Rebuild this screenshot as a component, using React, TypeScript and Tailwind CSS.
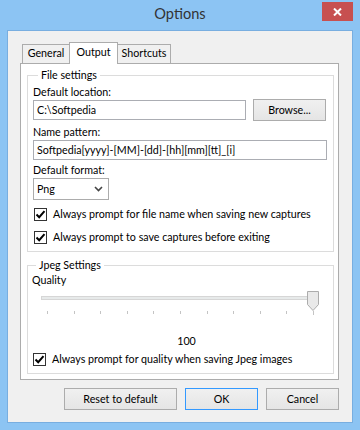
import React from "react";

const font = "font-['Lato','Liberation_Sans',sans-serif]";
const btn =
  "h-[22px] flex items-center justify-center border bg-gradient-to-b from-[#f0f0f0] to-[#e5e5e5] text-[10.7px] text-black";

const Check: React.FC<{ label: string }> = ({ label }) => (
  <div className="h-[16px] flex items-center gap-[6px] pl-[1px]">
    <span className="w-[13px] h-[13px] border border-[#333] bg-white flex items-center justify-center">
      <svg width="11" height="11" viewBox="0 0 11 11">
        <path d="M1.5 5.5 L4.2 8.2 L9.5 2.2" fill="none" stroke="#000" strokeWidth="2" />
      </svg>
    </span>
    <span>{label}</span>
  </div>
);

const Label: React.FC<{ text: string; className?: string }> = ({ text, className }) => (
  <div className={`h-[16px] leading-[16px] ${className ?? ""}`}>{text}</div>
);

const App: React.FC = () => {
  const ticks = Array.from({ length: 11 });

  return (
    <div className={`w-[360px] h-[430px] bg-[#8cc4f3] flex flex-col px-[7px] pb-[7px] ${font} text-[10.7px] text-black`}>
      {/* Title bar */}
      <div className="h-[30px] grid grid-cols-[1fr_auto_1fr]">
        <div />
        <div className="text-[14.6px] text-[#333] leading-[30px] -mt-[1px]">Options</div>
        <div className="flex justify-end items-start pt-[2px]">
          <div className="w-[31px] h-[19px] bg-[#c75050] flex items-center justify-center">
            <svg width="9" height="8" viewBox="0 0 9 8">
              <path d="M1 0.5 L8 7.5 M8 0.5 L1 7.5" stroke="#fff" strokeWidth="2" />
            </svg>
          </div>
        </div>
      </div>

      {/* Client area */}
      <div className="flex-1 bg-[#f0f0f0] border border-[#78aee0] pl-[12px] pr-[13px] pt-[11px]">
        {/* Tabs */}
        <div className="flex items-end h-[21px] pl-[2px]">
          <div className="w-[48px] h-[19px] border border-b-0 border-[#acacac] bg-[#f0f0f0] flex items-center justify-center pb-[1px]">
            General
          </div>
          <div className="relative z-10 -ml-[1px] w-[49px] h-[22px] -mb-[1px] border border-b-0 border-[#acacac] bg-white flex items-center justify-center pb-[3px]">
            Output
          </div>
          <div className="-ml-[1px] w-[54px] h-[19px] border border-b-0 border-[#acacac] bg-[#f0f0f0] flex items-center justify-center pb-[1px]">
            Shortcuts
          </div>
        </div>

        {/* Panel */}
        <div className="w-[319px] h-[317px] bg-white border border-[#acacac] pl-[6px] pt-[3px]">
          {/* File settings */}
          <fieldset className="w-[307px] border border-[#dcdcdc] pl-[5px] pr-[6px] pb-[6px]">
            <legend className="ml-[5px] px-[3px] leading-[16px]">File settings</legend>
            <Label text="Default location:" className="mt-[1px]" />
            <div className="flex gap-[7px]">
              <div className="w-[213px] h-[20px] border border-[#abadb3] bg-white flex items-center pl-[3px]">
                C:\Softpedia
              </div>
              <div className={`${btn} w-[73px] -mt-[1px] h-[22px] border-[#acacac]`}>Browse...</div>
            </div>
            <Label text="Name pattern:" className="mt-[3px]" />
            <div className="w-[294px] h-[20px] border border-[#abadb3] bg-white flex items-center pl-[3px]">
              Softpedia[yyyy]-[MM]-[dd]-[hh][mm][tt]_[i]
            </div>
            <Label text="Default format:" className="mt-[2px]" />
            <div className="w-[76px] h-[22px] border border-[#acacac] bg-white flex items-center justify-between pl-[3px] pr-[5px]">
              <span>Png</span>
              <svg width="9" height="6" viewBox="0 0 9 6">
                <path d="M1 1 L4.5 4.5 L8 1" fill="none" stroke="#444" strokeWidth="1.6" />
              </svg>
            </div>
            <div className="mt-[6px] flex flex-col gap-[7px]">
              <Check label="Always prompt for file name when saving new captures" />
              <Check label="Always prompt to save captures before exiting" />
            </div>
          </fieldset>

          {/* Jpeg settings */}
          <fieldset className="mt-[5px] w-[307px] border border-[#dcdcdc] pl-[4px] pr-[6px] pb-[6px]">
            <legend className="ml-[4px] px-[3px] leading-[16px]">Jpeg Settings</legend>
            <Label text="Quality" className="-mt-[1px]" />
            {/* Slider */}
            <div className="relative h-[26px] mt-[3px] ml-[9px] w-[278px]">
              <div className="absolute left-0 right-0 top-[5px] h-[4px] border border-[#d6d6d6] bg-[#e7eaea]" />
              <svg className="absolute right-0 top-0" width="12" height="20" viewBox="0 0 12 20">
                <path d="M0.5 0.5 H11.5 V13.5 L6 19.5 L0.5 13.5 Z" fill="#e9e9e9" stroke="#acacac" />
              </svg>
              <div className="absolute left-[6px] right-[5px] top-[20px] flex justify-between">
                {ticks.map((_, i) => (
                  <span key={i} className={`w-[1px] bg-[#c4c4c4] ${i === 10 ? "h-[4px]" : "h-[3px]"}`} />
                ))}
              </div>
            </div>
            <div className="mt-[16px] h-[16px] leading-[16px] text-center pl-[14px]">100</div>
            <div className="mt-[2px]">
              <Check label="Always prompt for quality when saving Jpeg images" />
            </div>
          </fieldset>
        </div>

        {/* Buttons */}
        <div className="mt-[8px] flex justify-end gap-[8px] w-[319px]">
          <div className={`${btn} w-[113px] border-[#acacac]`}>Reset to default</div>
          <div className={`${btn} w-[73px] border-[#3399ff]`}>OK</div>
          <div className={`${btn} w-[73px] border-[#acacac]`}>Cancel</div>
        </div>
      </div>
    </div>
  );
};

export default App;
